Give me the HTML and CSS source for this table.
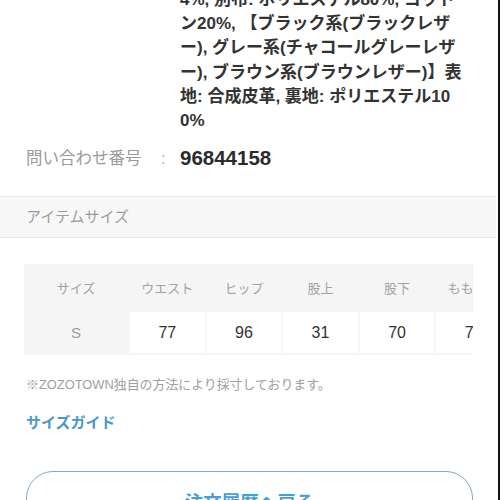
FILE: index.html
```html
<!DOCTYPE html>
<html lang="ja">
<head>
<meta charset="utf-8">
<link rel="stylesheet" href="styles.css">
</head>
<body>
<div class="page">
  <main class="content">
    <div class="spec-row desc-row">
      <div class="spec-key"></div>
      <div class="spec-value desc">4%, 別布: ポリエステル80%, コット<br>ン20%, 【ブラック系(ブラックレザ<br>ー), グレー系(チャコールグレーレザ<br>ー), ブラウン系(ブラウンレザー)】表<br>地: 合成皮革, 裏地: ポリエステル10<br>0%</div>
    </div>
    <div class="spec-row inquiry-row">
      <div class="spec-key"><span class="key-text">問い合わせ番号</span><span class="key-sep">:</span></div>
      <div class="spec-value inquiry">96844158</div>
    </div>

    <div class="band">アイテムサイズ</div>

    <div class="table-wrap">
      <div class="size-table">
        <div class="th">サイズ</div>
        <div class="th">ウエスト</div>
        <div class="th">ヒップ</div>
        <div class="th">股上</div>
        <div class="th">股下</div>
        <div class="th">もも周り</div>
        <div class="td td-size">S</div>
        <div class="td">77</div>
        <div class="td">96</div>
        <div class="td">31</div>
        <div class="td">70</div>
        <div class="td">72</div>
      </div>
    </div>

    <p class="note">※ZOZOTOWN独自の方法により採寸しております。</p>
    <a class="guide">サイズガイド</a>

    <div class="back-btn">注文履歴へ戻る</div>
  </main>
  <div class="frame-edge"></div>
</div>
</body>
</html>
```
FILE: styles.css
```css
html, body {
  margin: 0;
  padding: 0;
  background: #fff;
}
body {
  font-family: "Liberation Sans", "Noto Sans CJK JP", sans-serif;
  color: #333;
}
.page {
  display: flex;
  height: 500px;
  overflow: hidden;
}
.content {
  width: 496px;
  flex: none;
  overflow: hidden;
}
.frame-edge {
  width: 2px;
  margin-left: 2px;
  background: #111;
  flex: none;
}
.spec-row {
  display: flex;
  padding-left: 26px;
}
.spec-key {
  width: 154px;
  flex: none;
  display: flex;
  color: #9a9a9a;
  font-size: 16.5px;
}
.key-text {
  width: 135px;
}
.key-sep {
  color: #b0b0b0;
}
.desc-row {
  margin-top: -12px;
}
.desc {
  font-size: 17px;
  line-height: 24.2px;
  font-weight: 600;
  color: #333;
  white-space: nowrap;
}
.inquiry-row {
  margin-top: 11px;
  line-height: 28px;
}
.inquiry {
  font-size: 20.5px;
  font-weight: 700;
  color: #2b2b2b;
}
.band {
  margin-top: 24px;
  height: 40px;
  line-height: 40px;
  border-top: 1px solid #e8e8e8;
  border-bottom: 1px solid #e8e8e8;
  background: #f7f7f7;
  padding-left: 26px;
  font-size: 15px;
  color: #9c9c9c;
}
.table-wrap {
  margin: 26px 0 0 24px;
  width: 449px;
  overflow: hidden;
}
.size-table {
  display: grid;
  grid-template-columns: 104px repeat(5, 74.6px);
  grid-template-rows: 46px 41px;
  column-gap: 2px;
  row-gap: 2px;
  padding-bottom: 2px;
  background: #f5f5f5;
  width: max-content;
}
.th {
  display: flex;
  align-items: center;
  justify-content: center;
  font-size: 13px;
  color: #a3a3a3;
  white-space: nowrap;
}
.td {
  display: flex;
  align-items: center;
  justify-content: center;
  background: #fff;
  font-size: 16px;
  color: #333;
}
.td-size {
  background: transparent;
  color: #9a9a9a;
  font-size: 15px;
}
.note {
  margin: 21px 0 0 26px;
  font-size: 12.9px;
  line-height: 18px;
  color: #a0a0a0;
  white-space: nowrap;
}
.guide {
  display: block;
  margin: 18px 0 0 26px;
  font-size: 15px;
  line-height: 22px;
  font-weight: 700;
  color: #4a98c7;
}
.back-btn {
  margin: 37px 23px 0 26px;
  height: 58px;
  border: 1.5px solid #80a9c4;
  border-radius: 27px;
  display: flex;
  align-items: center;
  justify-content: center;
  font-size: 18.5px;
  font-weight: 700;
  color: #4aa0cc;
}
```
